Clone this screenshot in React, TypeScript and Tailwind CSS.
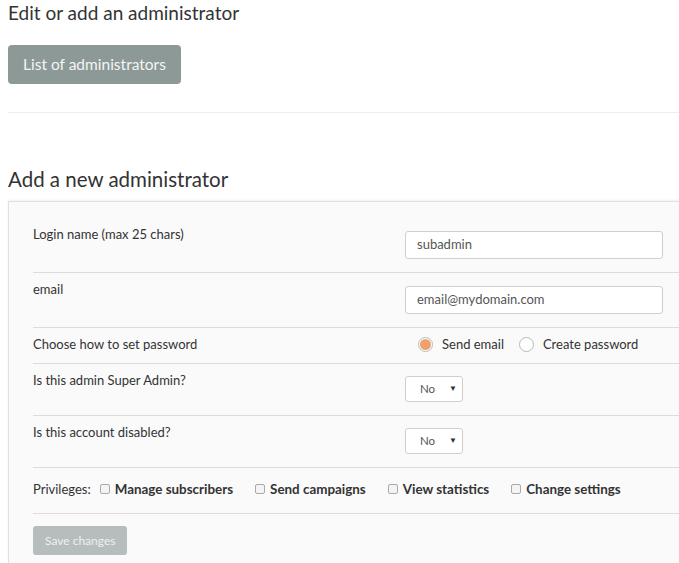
import React from 'react';

const font = { fontFamily: 'Lato, "Liberation Sans", sans-serif' };

function Radio({ checked, label }: { checked?: boolean; label: string }) {
  return (
    <label className="flex items-center gap-[9px]">
      <span className="w-[15px] h-[15px] rounded-full border border-[#b9b9b9] bg-white flex items-center justify-center">
        {checked && <span className="w-[11px] h-[11px] rounded-full bg-[#f0a06c]" />}
      </span>
      <span>{label}</span>
    </label>
  );
}

function Check({ label }: { label: string }) {
  return (
    <label className="flex items-center gap-[5px]">
      <span className="w-[10px] h-[10px] rounded-[2px] border border-[#aaa] bg-[#f4f4f4]" />
      <span className="font-bold text-[13.4px]">{label}</span>
    </label>
  );
}

function Select() {
  return (
    <div className="w-[58px] h-[26px] rounded-[3px] border border-[#cfcfcf] bg-white flex items-center justify-between pl-[14px] pr-[5px] text-[11.5px] text-[#555]">
      <span>No</span>
      <span className="text-[8px] text-[#333] -mt-[3px]">▼</span>
    </div>
  );
}

export default function App() {
  return (
    <div className="w-full h-[563px] overflow-hidden bg-white" style={font}>
      <div className="w-[720px] pl-[8px] text-[#333]">
        <h1 className="text-[19px] leading-6 pt-[1px]">Edit or add an administrator</h1>
        <button className="mt-[20px] h-[39px] px-[15px] rounded-[4px] bg-[#8d9997] text-[#f3f5f5] text-[15.5px]">
          List of administrators
        </button>
        <div className="mt-[28px] border-t border-[#eee]" />
        <h2 className="mt-[52px] text-[20.5px] leading-7">Add a new administrator</h2>
        <div className="mt-[8px] border border-[#e0e0e0] bg-[#fafafa] shadow-[0_-1px_2px_rgba(0,0,0,0.06)] pt-[16px] px-[24px] text-[13px]">
          {/* login */}
          <div className="flex border-b border-[#dcdcdc]">
            <div className="w-[372px] pt-[6px] leading-5">Login name (max 25 chars)</div>
            <div className="mt-[13px] mb-[13px] w-[258px] h-[28px] rounded-[3px] border border-[#cfcfcf] bg-white flex items-center pl-[11px] text-[#555]">
              subadmin
            </div>
          </div>
          {/* email */}
          <div className="flex border-b border-[#dcdcdc]">
            <div className="w-[372px] pt-[6px] leading-5">email</div>
            <div className="mt-[13px] mb-[13px] w-[258px] h-[28px] rounded-[3px] border border-[#cfcfcf] bg-white flex items-center pl-[11px] text-[#555]">
              email@mydomain.com
            </div>
          </div>
          {/* password */}
          <div className="flex border-b border-[#dcdcdc] pt-[6px] pb-[9px] leading-5">
            <div className="w-[385px]">Choose how to set password</div>
            <div className="flex gap-[15px]">
              <Radio checked label="Send email" />
              <Radio label="Create password" />
            </div>
          </div>
          {/* super admin */}
          <div className="flex border-b border-[#dcdcdc]">
            <div className="w-[372px] pt-[6px] leading-5">Is this admin Super Admin?</div>
            <div className="mt-[12px] mb-[13px]">
              <Select />
            </div>
          </div>
          {/* disabled */}
          <div className="flex border-b border-[#dcdcdc]">
            <div className="w-[372px] pt-[6px] leading-5">Is this account disabled?</div>
            <div className="mt-[12px] mb-[13px]">
              <Select />
            </div>
          </div>
          {/* privileges */}
          <div className="flex items-center border-b border-[#dcdcdc] pt-[11px] pb-[14px] leading-5">
            <span className="mr-[9px]">Privileges:</span>
            <div className="flex gap-[22px]">
              <Check label="Manage subscribers" />
              <Check label="Send campaigns" />
              <Check label="View statistics" />
              <Check label="Change settings" />
            </div>
          </div>
          <div className="pt-[12px] pb-[20px]">
            <button className="h-[29px] px-[12px] rounded-[3px] bg-[#b6bdbd] text-[#eef1f1] text-[12px]">
              Save changes
            </button>
          </div>
        </div>
      </div>
    </div>
  );
}
